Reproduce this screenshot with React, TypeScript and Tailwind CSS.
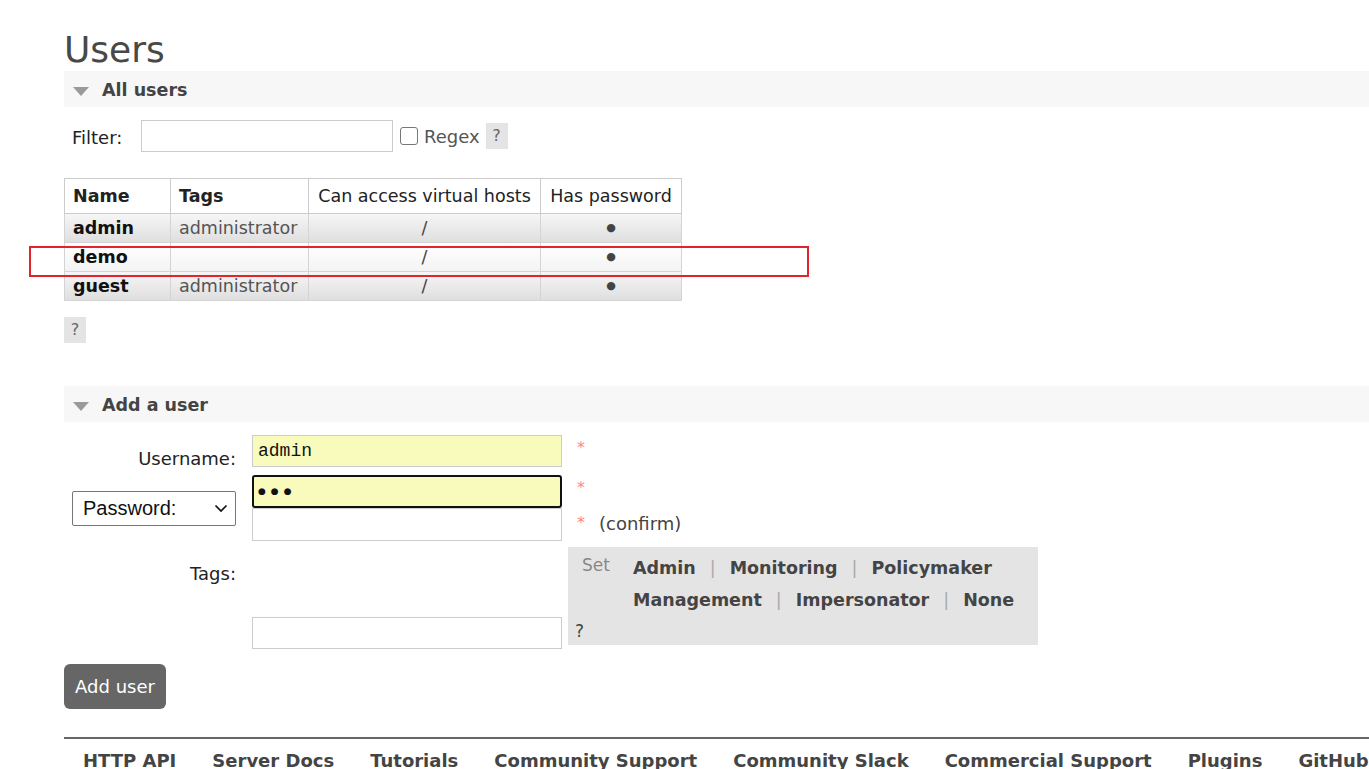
import React from "react";

const TAG_LINKS = [
	["Admin", "Monitoring", "Policymaker"],
	["Management", "Impersonator", "None"],
];

const USERS = [
	{ name: "admin", tags: "administrator", vhosts: "/", alt: true },
	{ name: "demo", tags: "", vhosts: "/", alt: false },
	{ name: "guest", tags: "administrator", vhosts: "/", alt: true },
];

const FOOTER = [
	"HTTP API",
	"Server Docs",
	"Tutorials",
	"Community Support",
	"Community Slack",
	"Commercial Support",
	"Plugins",
	"GitHub",
];

function SectionHeader({ title }: { title: string }) {
	return (
		<div className="flex h-[36px] items-center bg-[#f7f7f7]">
			<span className="ml-[9px] mt-[4px] h-0 w-0 border-x-[8px] border-t-[9px] border-x-transparent border-t-[#9a9a9a]" />
			<span className="ml-[13px] mt-[3px] text-[17.5px] font-bold text-[#444]">{title}</span>
		</div>
	);
}

function Help({ className = "" }: { className?: string }) {
	return (
		<span
			className={`flex h-[26px] w-[22px] items-center justify-center bg-[#e4e4e4] text-[16px] text-[#666] ${className}`}
		>
			?
		</span>
	);
}

function Star({ className = "" }: { className?: string }) {
	return <span className={`text-[16px] leading-[20px] text-[#f88] ${className}`}>*</span>;
}

export default function App() {
	return (
		<div className="relative min-h-screen overflow-hidden bg-white pl-[64px] font-['DejaVu_Sans',sans-serif] text-[18px] text-[#222]">
			<h1 className="mt-[29px] text-[36px] leading-[42px] font-normal text-[#484848]">Users</h1>

			{/* All users */}
			<SectionHeader title="All users" />
			<div className="mt-[13px] flex h-[32px] items-center">
				<span className="ml-[8px] mt-[3px] w-[69px] text-[18px] text-[#222]">Filter:</span>
				<input className="h-[32px] w-[252px] border border-[#ccc] bg-white outline-none" />
				<span className="ml-[7px] h-[18px] w-[18px] rounded-[3px] border border-[#777] bg-white" />
				<span className="ml-[6px] text-[18px] text-[#555]">Regex</span>
				<Help className="ml-[6px]" />
			</div>

			<table className="mt-[26px] table-fixed border-collapse whitespace-nowrap text-[17.5px]">
				<thead>
					<tr className="h-[35px] bg-white">
						<th className="w-[106px] border border-[#ccc] px-[8px] text-left font-bold">Name</th>
						<th className="w-[138px] border border-[#ccc] px-[8px] text-left font-bold">Tags</th>
						<th className="w-[232px] border border-[#ccc] px-[6px] text-center font-normal">Can access virtual hosts</th>
						<th className="w-[141px] border border-[#ccc] px-[6px] text-center font-normal">Has password</th>
					</tr>
				</thead>
				<tbody>
					{USERS.map((u) => (
						<tr
							key={u.name}
							className={`h-[29px] ${u.alt ? "bg-linear-to-b from-[#f6f6f6] to-[#dedede]" : "bg-linear-to-b from-white to-[#f3f3f3]"}`}
						>
							<td className="border border-[#d4d4d4] px-[8px] font-bold text-[#111]">{u.name}</td>
							<td className="border border-[#d4d4d4] px-[8px] text-[#555]">{u.tags}</td>
							<td className="border border-[#d4d4d4] px-[8px] text-center text-[#444]">{u.vhosts}</td>
							<td className="border border-[#d4d4d4] px-[8px] text-center text-[11px] text-[#444]">●</td>
						</tr>
					))}
				</tbody>
			</table>

			<Help className="mt-[16px]" />

			{/* Add a user */}
			<div className="mt-[43px]">
				<SectionHeader title="Add a user" />
			</div>

			<div className="mt-[13px] flex h-[32px]">
				<div className="flex w-[172px] justify-end pt-[10px]">Username:</div>
				<div className="ml-[16px] h-[32px] w-[310px] border border-[#ccc] bg-[#f9fbbd] px-[5px] font-['Liberation_Mono',monospace] text-[18px] leading-[30px] text-[#111]">
					admin
				</div>
				<Star className="ml-[15px] mt-[3px]" />
			</div>

			<div className="mt-[8px] flex">
				<div className="flex w-[172px] items-center">
					<div className="ml-[8px] flex h-[35px] w-[164px] items-center justify-between rounded-[2px] border border-[#767676] bg-white pl-[10px] pr-[6px] font-['Liberation_Sans',sans-serif] text-[20px] text-[#111]">
						Password:
						<svg width="16" height="16" viewBox="0 0 16 16" fill="none" stroke="#111" strokeWidth="1.7">
							<path d="M2.5 5.5l5.5 5.5 5.5-5.5" />
						</svg>
					</div>
				</div>
				<div className="ml-[16px] flex w-[310px] flex-col">
					<div className="flex h-[33px] items-center rounded-[3px] border-2 border-[#111] bg-[#f9fbbd] px-[4px] text-[9px] tracking-[5px] text-[#111]">
						●●●
					</div>
					<div className="h-[33px] border border-[#ccc] bg-white" />
				</div>
				<div className="ml-[15px] flex flex-col">
					<Star className="mt-[3px]" />
					<div className="mt-[12px] flex items-center">
						<Star className="mt-[-2px]" />
						<span className="ml-[14px] text-[#444]">(confirm)</span>
					</div>
				</div>
			</div>

			<div className="mt-[6px] flex">
				<div className="flex w-[172px] justify-end pt-[13px]">Tags:</div>
				<div className="ml-[16px] mt-[70px] h-[32px] w-[310px] border border-[#ccc] bg-white" />
				<div className="ml-[6px] flex h-[98px] w-[470px] flex-col bg-[#e4e4e4] pl-[7px]">
					<div className="flex pt-[6px]">
						<span className="ml-[7px] w-[51px] text-[17px] text-[#888]">Set</span>
						<div className="flex flex-col gap-[6px] pt-[2px]">
							{TAG_LINKS.map((row, i) => (
								<div key={i} className="flex items-center text-[17.5px] font-bold text-[#444]">
									{row.map((t, j) => (
										<React.Fragment key={t}>
											{j > 0 && <span className="mx-[14px] font-normal text-[#aaa]">|</span>}
											<span>{t}</span>
										</React.Fragment>
									))}
								</div>
							))}
						</div>
					</div>
					<span className="mt-[5px] text-[17px] text-[#444]">?</span>
				</div>
			</div>

			<button className="mt-[15px] h-[45px] w-[102px] rounded-[6px] bg-[#666] text-[18px] text-white">Add user</button>

			{/* Footer */}
			<div className="mt-[28px] border-t-2 border-[#666]">
				<div className="flex gap-[36px] whitespace-nowrap pl-[19px] pt-[8px] text-[18px] font-bold text-[#444]">
					{FOOTER.map((f) => (
						<span key={f}>{f}</span>
					))}
				</div>
			</div>

			{/* annotation highlight */}
			<div className="absolute left-[29px] top-[246px] h-[31px] w-[780px] border-2 border-[#e3232b]" />
		</div>
	);
}
